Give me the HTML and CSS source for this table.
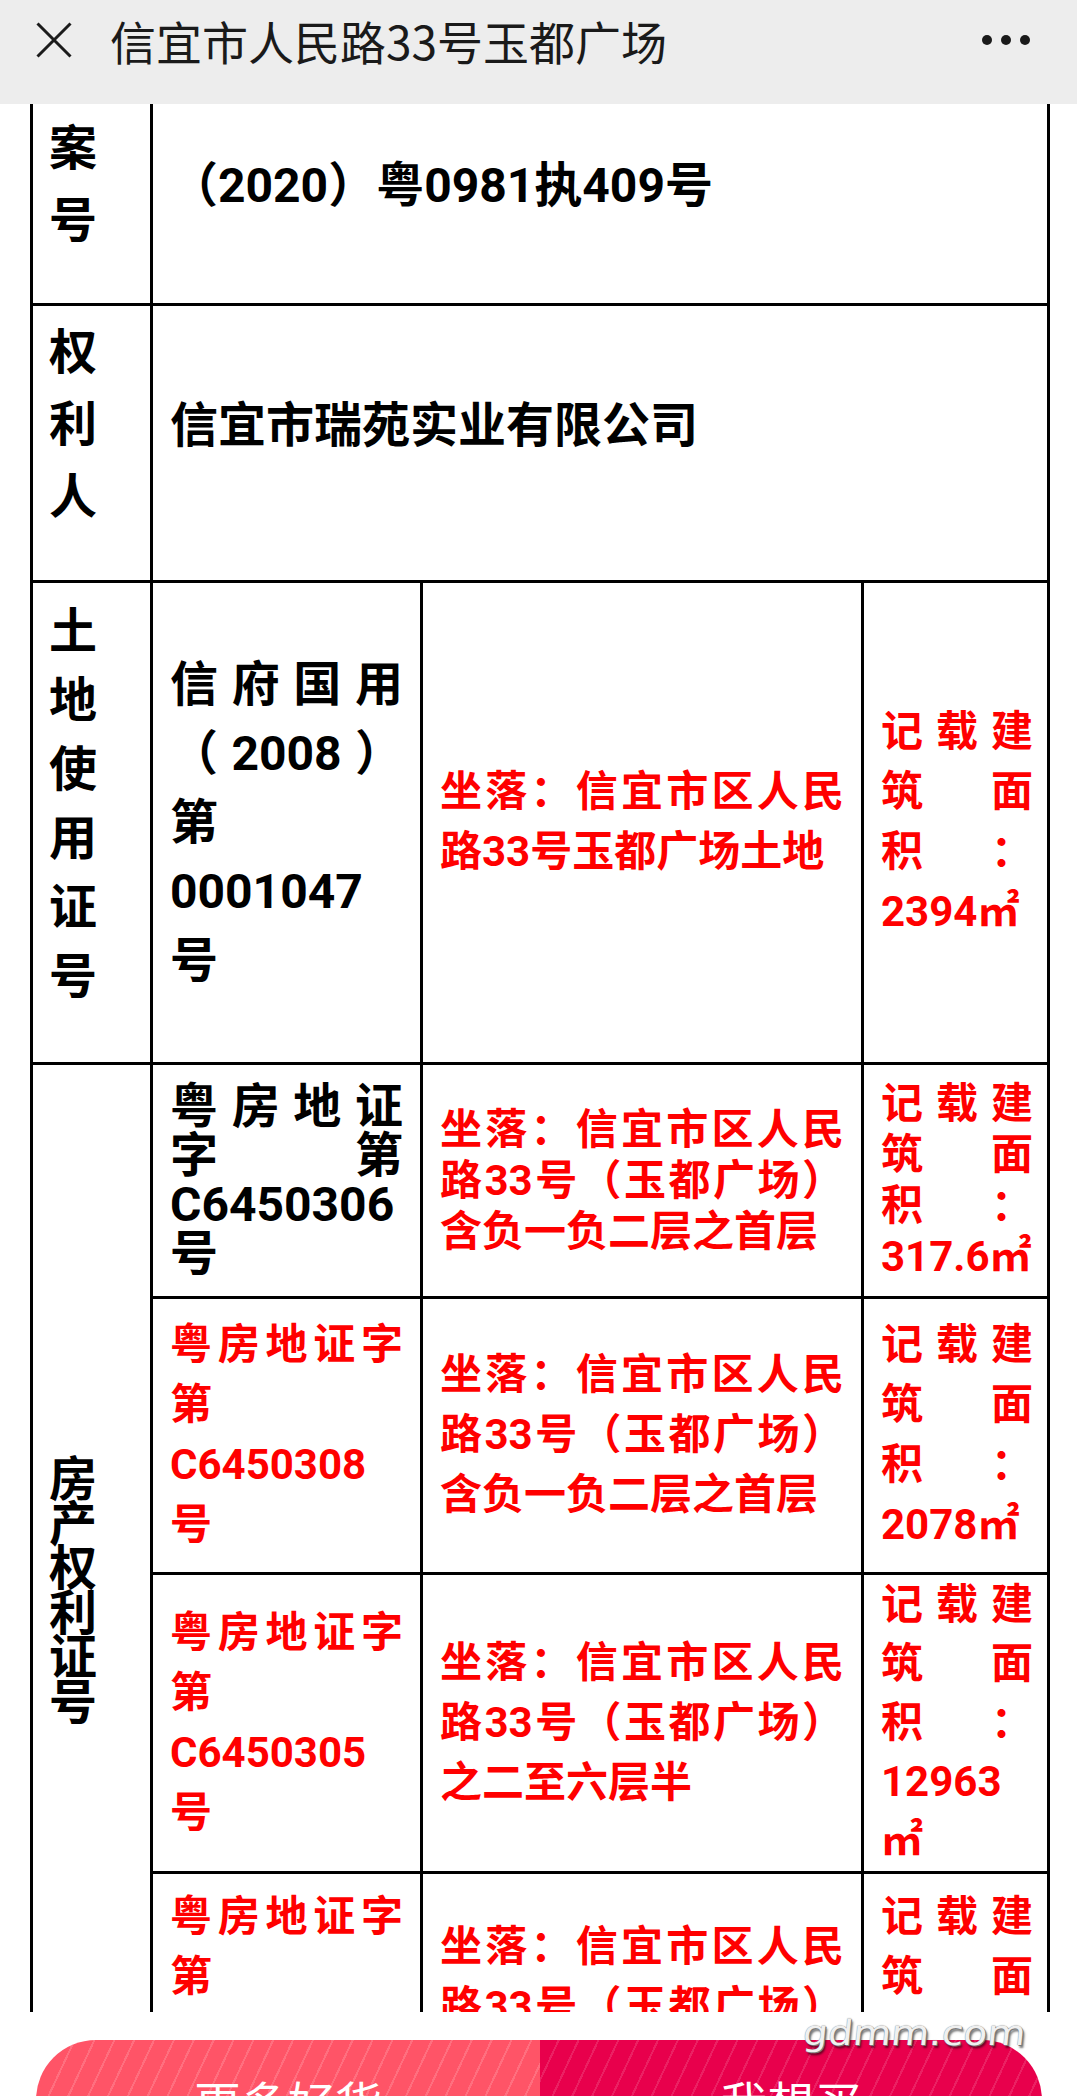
FILE: index.html
```html
<!DOCTYPE html>
<html lang="zh-CN">
<head>
<meta charset="utf-8">
<title>信宜市人民路33号玉都广场</title>
<link rel="stylesheet" href="styles.css">
</head>
<body>
<div class="page">
  <header class="topbar">
    <svg class="close" viewBox="0 0 36 36" width="36" height="36" aria-hidden="true">
      <path d="M1.5 1.5 L34.5 34.5 M34.5 1.5 L1.5 34.5" stroke="#1b1b1b" stroke-width="3" fill="none"/>
    </svg>
    <h1 class="title">信宜市人民路33号玉都广场</h1>
    <div class="more"><span></span><span></span><span></span></div>
  </header>

  <main class="viewport">
    <table class="deed">
      <colgroup>
        <col class="w1"><col class="w2"><col class="w3"><col class="w4">
      </colgroup>
      <tr class="r1">
        <td class="c1 lh72">案号</td>
        <td colspan="3" class="blk up">（2020）粤0981执409号</td>
      </tr>
      <tr class="r2">
        <td class="c1 lh72">权利人</td>
        <td colspan="3" class="blk up">信宜市瑞苑实业有限公司</td>
      </tr>
      <tr class="r3">
        <td class="c1 lh69">土地使用证号</td>
        <td class="blk">信府国用（2008）第0001047号</td>
        <td class="red">坐落：信宜市区人民路33号玉都广场土地</td>
        <td class="red c4">记载建筑面积：2394㎡</td>
      </tr>
      <tr class="r4a">
        <td class="c1 lh44" rowspan="4">房产权利证号</td>
        <td class="blk tight">粤房地证字第C6450306号</td>
        <td class="red lh51">坐落：信宜市区人民路33号（玉都广场）含负一负二层之首层</td>
        <td class="red lh51 c4">记载建筑面积：317.6㎡</td>
      </tr>
      <tr class="r4b">
        <td class="red">粤房地证字第C6450308号</td>
        <td class="red">坐落：信宜市区人民路33号（玉都广场）含负一负二层之首层</td>
        <td class="red c4">记载建筑面积：2078㎡</td>
      </tr>
      <tr class="r4c">
        <td class="red">粤房地证字第C6450305号</td>
        <td class="red">坐落：信宜市区人民路33号（玉都广场）之二至六层半</td>
        <td class="red lh59 c4">记载建筑面积：12963㎡</td>
      </tr>
      <tr class="r4d">
        <td class="red">粤房地证字第C6450307号</td>
        <td class="red">坐落：信宜市区人民路33号（玉都广场）之七层</td>
        <td class="red c4">记载建筑面积：1685㎡</td>
      </tr>
    </table>
  </main>

  <footer class="bottom">
    <div class="buy">
      <div class="btn btn-more">更多好货</div>
      <div class="btn btn-want">我想买</div>
    </div>
    <div class="wm">gdmm.com</div>
  </footer>
</div>
</body>
</html>
```

FILE: styles.css
```css
* { box-sizing: border-box; }
html, body { margin: 0; padding: 0; }
body {
  width: 1077px;
  height: 2096px;
  overflow: hidden;
  background: #fff;
  font-family: Roboto, "Noto Sans CJK SC", sans-serif;
}
.page { width: 1077px; height: 2096px; overflow: hidden; }

/* top bar */
.topbar {
  height: 104px;
  background: #ededed;
  display: flex;
  align-items: center;
  padding: 0 47px 24px 36px;
}
.close { width: 36px; height: 36px; flex: none; }
.title {
  margin: 0 0 0 38px;
  font-family: "Noto Sans CJK SC", sans-serif;
  font-size: 46px;
  font-weight: 400;
  line-height: 1;
  color: #1a1a1a;
  white-space: nowrap;
}
.more { margin-left: auto; display: flex; gap: 9px; }
.more span { width: 10px; height: 10px; border-radius: 50%; background: #1a1a1a; }

/* scrolled content */
.viewport { height: 1908px; overflow: hidden; }

.deed {
  border-collapse: collapse;
  table-layout: fixed;
  width: 1017px;
  margin-left: 30px;
  font-weight: 700;
}
.w1 { width: 120px; }
.w2 { width: 270px; }
.w3 { width: 441px; }
.w4 { width: 186px; }

.deed td {
  border: 3px solid #000;
  padding: 0 17px;
  vertical-align: middle;
  text-align: justify;
}
.deed td.c4 { padding: 0 14px 0 17px; }
.r1 td { border-top: 0; }
.r1 { height: 200px; }
.r2 { height: 277px; }
.r3 { height: 482px; }
.r4a { height: 234px; }
.r4b { height: 276px; }
.r4c { height: 299px; }
.r4d { height: 270px; }

.c1 {
  font-size: 48px;
  color: #000;
  padding: 0 16px 36px 16px !important;
}
.lh72 { line-height: 72px; }
.lh69 { line-height: 69px; }
.lh44 { line-height: 44.5px; padding-bottom: 22px !important; }

.blk { font-size: 48px; line-height: 69px; color: #000; }
.blk.up { line-height: 72px; padding-bottom: 34px; }
.blk.tight { line-height: 49px; }

.red { font-size: 42px; line-height: 60px; color: #ff0000; }
.red.lh51 { line-height: 51px; }
.red.lh59 { line-height: 59px; }

/* bottom action bar */
.bottom {
  position: relative;
  height: 84px;
  padding-top: 28px;
  overflow: hidden;
}
.buy {
  display: flex;
  width: 1006px;
  height: 120px;
  margin-left: 36px;
  border-radius: 60px;
  overflow: hidden;
}
.btn {
  display: flex;
  justify-content: center;
  align-items: center;
  font-family: "Noto Sans CJK SC", sans-serif;
  font-size: 47px;
  color: #fff;
}
.btn-more {
  width: 504px;
  background:
    repeating-linear-gradient(115deg, rgba(255,255,255,0) 0 16px, rgba(255,255,255,0.16) 16px 18px),
    #ff5467;
}
.btn-want {
  flex: 1;
  background:
    repeating-linear-gradient(115deg, rgba(255,255,255,0) 0 16px, rgba(255,255,255,0.13) 16px 18px),
    #e8004c;
}
.wm {
  position: absolute;
  left: 806px;
  top: -4px;
  font-family: "DejaVu Sans", sans-serif;
  font-weight: 400;
  font-size: 35px;
  line-height: 50px;
  color: #f0f0f0;
  transform: skewX(-6deg) scaleX(1.12);
  transform-origin: left top;
  text-shadow: 0 0 1px #6a6a6a, 1px 1px 0 #7a7a7a, 2px 3px 2px rgba(0,0,0,0.55);
}
```
